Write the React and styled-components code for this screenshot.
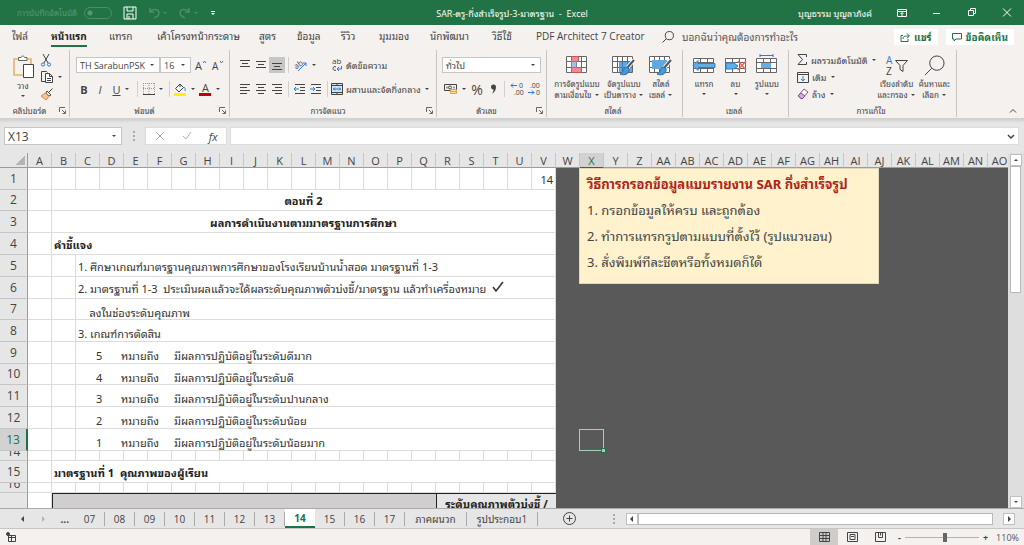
import React from 'react';
import styled, { createGlobalStyle, css } from 'styled-components';

const Global = createGlobalStyle`
  *, *::before, *::after { box-sizing: border-box; }
  html, body { margin: 0; padding: 0; }
  body { font-family: "Open Sans", "Noto Sans Thai Looped", Loma, "Noto Sans Thai", sans-serif; font-size: 10px; color: #444; overflow: hidden; }
  button, input, select { font: inherit; color: inherit; margin: 0; }
  button { border: 0; padding: 0; background: none; }
  svg { overflow: visible; flex: none; }
  h1, h2, p { margin: 0; font-size: inherit; font-weight: inherit; }
`;

const Page = styled.div`
  display: flex;
  flex-direction: column;
  height: 100vh;
  background: #e6e6e6;
`;

/* ---------- title bar ---------- */

const TitleBar = styled.header`
  display: grid;
  grid-template-columns: 1fr auto 1fr;
  align-items: center;
  flex: none;
  height: 25px;
  background: #217346;
  color: #fff;
  font-size: 9px;
`;

const QuickAccess = styled.div`
  display: flex;
  align-items: center;
  padding-left: 17px;
  gap: 11px;
`;

const AutoSave = styled.label`
  display: flex;
  align-items: center;
  gap: 7px;
  color: #57976f;
  white-space: nowrap;
  font-size: 8px;
`;

const Toggle = styled.input`
  appearance: none;
  width: 28px;
  height: 12px;
  margin: 0;
  border: 1px solid #4c8d66;
  border-radius: 6px;
  background: radial-gradient(circle at 5px 5px, #57976f 2px, transparent 3px);
`;

const QuickButton = styled.button`
  display: flex;
  align-items: center;
  gap: 2px;
  color: ${(p) => (p.$dim ? '#4c8d66' : '#fff')};
`;

const DocTitle = styled.h1`
  white-space: nowrap;
`;

const WindowTools = styled.div`
  display: flex;
  align-items: center;
  justify-content: flex-end;
  gap: 25px;
  padding-right: 12px;
  white-space: nowrap;
`;

const WindowButton = styled.button`
  display: flex;
  color: #fff;
`;

/* ---------- ribbon tabs ---------- */

const TabRow = styled.nav`
  display: flex;
  align-items: center;
  flex: none;
  height: 24px;
  padding: 0 10px 0 12px;
  background: #f4f1ef;
  white-space: nowrap;
`;

const RibbonTab = styled.button`
  flex: none;
  width: ${(p) => p.$w}px;
  text-align: left;
  font-weight: ${(p) => (p.$active ? 700 : 400)};
  color: ${(p) => (p.$active ? '#222' : '#444')};

  span {
    display: inline-block;
    line-height: 18px;
    border-bottom: 2px solid ${(p) => (p.$active ? '#217346' : 'transparent')};
  }
`;

const Search = styled.label`
  display: flex;
  align-items: center;
  flex: 1;
  gap: 8px;
  min-width: 0;

  input {
    flex: 1;
    min-width: 0;
    padding: 0;
    border: 0;
    outline: 0;
    background: none;
  }
  input::placeholder { color: #555; opacity: 1; }
`;

const TabActions = styled.div`
  display: flex;
  gap: 8px;
`;

const ActionButton = styled.button`
  display: flex;
  align-items: center;
  gap: 4px;
  height: 16px;
  padding: 0 6px;
  background: #fff;
  color: #217346;
  font-weight: 700;
  line-height: 16px;
`;

/* ---------- ribbon ---------- */

const Ribbon = styled.div`
  display: flex;
  flex: none;
  height: 70px;
  padding: 1px 0;
  background: #f4f1ef;
  border-bottom: 1px solid #d2d0ce;
  color: #444;
`;

const Group = styled.section`
  display: flex;
  flex-direction: column;
  flex: none;
  width: ${(p) => p.$w}px;
  border-right: 1px solid #c8c6c4;
`;

const GroupBody = styled.div`
  display: flex;
  flex: 1;
  min-height: 0;
  padding: 1px 6px 0 ${(p) => p.$left || 6}px;
  gap: ${(p) => p.$gap || 0}px;
`;

const GroupFoot = styled.footer`
  display: grid;
  grid-template-columns: 1fr auto;
  align-items: center;
  height: 13px;
  padding-right: 3px;
  text-align: center;
  font-size: 8px;
  line-height: 12px;
`;

const Stack = styled.div`
  display: flex;
  flex-direction: column;
  gap: ${(p) => (p.$spread ? 4 : 0)}px;
  padding-top: ${(p) => (p.$spread ? 4 : 0)}px;
`;

const ToolRow = styled.div`
  display: flex;
  align-items: center;
  height: ${(p) => p.$h || 20}px;
`;

const Tool = styled.button`
  display: flex;
  align-items: center;
  justify-content: center;
  flex: none;
  height: 16px;
  width: ${(p) => (p.$w ? p.$w + 'px' : 'auto')};
  gap: 3px;
  background: ${(p) => (p.$on ? '#c8c6c4' : 'none')};
  white-space: nowrap;
  font-size: ${(p) => p.$size || 9}px;
`;

const BigTool = styled.button`
  display: flex;
  flex-direction: column;
  align-items: center;
  justify-content: flex-start;
  flex: none;
  width: ${(p) => p.$w}px;
  height: 52px;
  padding-top: 4px;
  font-size: 8px;
  line-height: 11px;
  white-space: nowrap;

  > svg:first-child { margin-bottom: 2px; }
  > svg:last-child { margin-top: 2px; }
`;

const Divider = styled.i`
  flex: none;
  width: 1px;
  height: 16px;
  margin: 0 3px;
  background: #d2d0ce;
`;

const Combo = styled.span`
  display: flex;
  align-items: center;
  flex: none;
  position: relative;
  width: ${(p) => p.$w}px;
  height: ${(p) => p.$h || 16}px;
  border: 1px solid #c8c6c4;
  background: #fff;

  select, input {
    appearance: none;
    width: 100%;
    height: 100%;
    padding: 0 0 0 3px;
    border: 0;
    outline: 0;
    background: none;
    font-size: ${(p) => p.$size || 9}px;
  }
  svg { position: absolute; right: 4px; pointer-events: none; }
`;

/* ---------- formula bar ---------- */

const FormulaBar = styled.div`
  display: flex;
  align-items: center;
  flex: none;
  height: 34px;
  padding: 0 5px 0 4px;
  box-shadow: inset 0 4px 3px -2px #d0d0d0;
`;

const Dots = styled.span`
  display: grid;
  gap: 2px;
  margin: ${(p) => p.$m || '0 10px 0 11px'};

  i { width: 2px; height: 2px; background: #aaa; }
`;

const FormulaTools = styled.div`
  display: flex;
  align-items: center;
  justify-content: space-around;
  flex: none;
  width: 82px;
  height: 18px;
  margin-right: 3px;
  background: #fff;
  border: 1px solid #dcdcdc;
`;

const FormulaField = styled.label`
  display: flex;
  align-items: center;
  flex: 1;
  height: 18px;
  padding-right: 3px;
  background: #fff;
  border: 1px solid #dcdcdc;

  input { flex: 1; border: 0; outline: 0; background: none; height: 100%; min-width: 0; }
`;

/* ---------- worksheet ---------- */

const SheetArea = styled.main`
  display: flex;
  flex: 1;
  min-height: 0;
`;

const Viewport = styled.div`
  position: relative;
  flex: 1;
  min-width: 0;
  overflow: hidden;
`;

const sheetFont = '"Noto Sans Thai Looped", "Noto Sans", sans-serif';

const Sheet = styled.table`
  table-layout: fixed;
  width: 1012px;
  border-collapse: separate;
  border-spacing: 0;
  background: #fff;
  color: #333;
  font-family: ${sheetFont};
  font-size: 11px;
  line-height: 14px;
`;

const ColHead = styled.th`
  height: 15px;
  padding: 1px 0 0;
  background: ${(p) => (p.$on ? '#d2d2d2' : '#e6e6e6')};
  color: ${(p) => (p.$on ? '#217346' : '#444')};
  border-right: 1px solid #c6c6c6;
  border-bottom: 1px solid ${(p) => (p.$on ? '#217346' : '#9b9b9b')};
  font: 400 11px/12px "Open Sans", sans-serif;
  white-space: nowrap;
`;

const Corner = styled.th`
  height: 15px;
  padding: 0;
  background: linear-gradient(135deg, transparent 50%, #b4b4b4 50%) 16px 3px / 9px 9px no-repeat #e6e6e6;
  border-right: 1px solid #9b9b9b;
  border-bottom: 1px solid #9b9b9b;
`;

const RowHead = styled.th`
  height: ${(p) => p.$h}px;
  padding: 0;
  background: ${(p) => (p.$on ? '#d2d2d2' : '#e6e6e6')};
  color: ${(p) => (p.$on ? '#217346' : '#444')};
  border-right: ${(p) => (p.$on ? '2px solid #217346' : '1px solid #9b9b9b')};
  border-bottom: 1px solid #c6c6c6;
  font: 400 12px/16px "Open Sans", sans-serif;

  div {
    ${(p) => p.$h < 16 && css`
      height: ${p.$h - 1}px;
      line-height: 1px;
      overflow: hidden;
    `}
  }
`;

const Cell = styled.td`
  padding: ${(p) => (p.$low ? 5 : 0)}px 2px 0;
  white-space: pre;
  vertical-align: middle;
  text-align: ${(p) => p.$align || 'left'};
  border-right: 1px solid #dcdcdc;
  border-bottom: 1px solid #dcdcdc;
  ${(p) => p.$bold && css`font-weight: 700; color: #222;`}
  ${(p) => p.$table && css`
    background: ${p.$table};
    border-top: 1px solid #222;
    border-left: 1px solid #222;
    border-bottom: 0;
    border-right: 0;
  `}
`;

const Outside = styled.td`
  padding: 0;
  background: #595959;
`;

const Level = styled.div`
  display: grid;
  grid-template-columns: 43px 53px 1fr;

  > :first-child { padding-left: 18px; }
`;

const CheckMark = styled.svg`
  margin-left: 4px;
`;

const Note = styled.aside`
  position: absolute;
  left: 579px;
  top: 15px;
  width: 300px;
  height: 116px;
  padding: 2px 7px;
  background: #fff2cc;
  border: 1px solid #e0d8bc;
  font-family: ${sheetFont};
  font-size: 13px;
  line-height: 26px;
  white-space: nowrap;
  color: #444;

  h2 { font-weight: 700; color: #b02418; }
`;

const Selection = styled.div`
  position: absolute;
  left: 579px;
  top: 276px;
  width: 25px;
  height: 22px;
  border: 1px solid #9fd5b7;

  &::after {
    content: "";
    position: absolute;
    right: -3px;
    bottom: -3px;
    width: 5px;
    height: 5px;
    background: #9fd5b7;
    border: 1px solid #217346;
  }
`;

const VScroll = styled.div`
  display: flex;
  flex-direction: column;
  flex: none;
  width: 16px;
  padding: 1px 3px 0 2px;
  background: #dedede;
`;

const ScrollButton = styled.button`
  display: flex;
  align-items: center;
  justify-content: center;
  flex: none;
  width: 12px;
  height: 12px;
  background: #fff;
  border: 1px solid #c0c0c0;
`;

const Thumb = styled.div`
  flex: ${(p) => p.$flex};
  background: #fff;
  border: 1px solid #b8b8b8;
`;

const Track = styled.div`
  flex: ${(p) => p.$flex};
`;

/* ---------- sheet tabs and status bar ---------- */

const SheetTabs = styled.div`
  display: flex;
  align-items: center;
  flex: none;
  height: 21px;
  border-top: 1px solid #ababab;
  border-bottom: 1px solid #c6c6c6;
  color: #444;
`;

const TabNav = styled.div`
  display: flex;
  align-items: center;
  justify-content: space-between;
  flex: none;
  width: 75px;
  padding: 0 6px 0 20px;

  svg + svg { opacity: .3; }
`;

const SheetTab = styled.button`
  flex: none;
  width: ${(p) => p.$w || 30}px;
  height: 14px;
  line-height: 12px;
  border-right: 1px solid #ababab;
  white-space: nowrap;
  ${(p) => p.$on && css`
    height: 19px;
    background: #fff;
    color: #217346;
    font-weight: 700;
    border-bottom: 2px solid #217346;
    border-right: 0;
  `}
`;

const AddSheet = styled.button`
  display: flex;
  margin-left: 25px;
`;

const HScroll = styled.div`
  display: flex;
  align-items: center;
  flex: 1;
  height: 12px;
  padding-right: 9px;

  > div { height: 12px; }
`;

const StatusBar = styled.footer`
  display: flex;
  align-items: center;
  flex: none;
  height: 16px;
  padding: 0 5px 0 6px;
  background: #f4f1ef;
  font-size: 9px;
`;

const ViewButtons = styled.div`
  display: flex;
  margin-left: auto;
`;

const ViewButton = styled.button`
  display: flex;
  align-items: center;
  justify-content: center;
  width: 28px;
  height: 16px;
  background: ${(p) => (p.$on ? '#cfccca' : 'none')};
`;

const Zoom = styled.div`
  display: flex;
  align-items: center;
  gap: 4px;
  margin-left: 4px;

  input {
    appearance: none;
    width: 74px;
    height: 10px;
    background: linear-gradient(#b4b2b0, #b4b2b0) 0 5px / 100% 1px no-repeat;
  }
  input::-webkit-slider-thumb {
    appearance: none;
    width: 4px;
    height: 9px;
    background: #666;
  }
  output { margin-left: 4px; color: #555; }
`;

const CollapseButton = styled.button`
  display: flex;
  align-self: flex-end;
  margin: 0 7px 3px auto;
`;

/* ---------- icons ---------- */

const Svg = ({ w = 16, h = w, vb, children, ...rest }) => (
  <svg width={w} height={h} viewBox={vb || `0 0 ${w} ${h}`} fill="none" stroke="currentColor" aria-hidden="true" {...rest}>
    {children}
  </svg>
);

const Caret = ({ up, left, right }) => (
  <Svg w={6} h={6} stroke="none">
    <path fill="currentColor" d={up ? 'M1 4h4L3 2z' : left ? 'M4 0v6L1 3z' : right ? 'M2 0v6l3-3z' : 'M1 2h4L3 4z'} />
  </Svg>
);

const Lines = ({ rows }) => (
  <Svg w={12} h={12}>
    {rows.map(([x, y, w]) => <path key={y} d={`M${x} ${y}.5h${w}`} />)}
  </Svg>
);

const PasteIcon = () => (
  <Svg w={22} h={23}>
    <path stroke="#e5b566" strokeWidth="1.600" d="M6 4H2v16h9M15 4h4v5" />
    <path fill="#fff" stroke="#666" d="M6.500 5.500v-3h2.500c.5-2 3-2 3.500 0h2.500v3z" />
    <path fill="#fff" stroke="#444" d="M11.500 9.500h10v13h-10z" />
  </Svg>
);
const CutIcon = () => (
  <Svg w={12} h={14}>
    <path stroke="#444" d="M3 1l5 9M9 1L4 10" />
    <circle cx="3" cy="11.500" r="1.600" stroke="#2b7cd3" /><circle cx="9" cy="11.500" r="1.600" stroke="#2b7cd3" />
  </Svg>
);
const CopyIcon = () => (
  <Svg w={14} h={14}>
    <path d="M5 11.500H1.500V1.500h5l1 1" /><path fill="#fff" d="M5.500 3.500h4l3 3v6h-7z" /><path d="M9.500 3.500v3h3M7 8.500h4M7 10.500h4" />
  </Svg>
);
const BrushIcon = () => (
  <Svg w={14} h={14}>
    <path d="M12.500 1.500L8 6M7 4l4 4-2 1-3-3z" /><path fill="#f5c39a" stroke="#e08a45" d="M5.500 6L9 9.500 6 13 1 9z" />
  </Svg>
);
const OrientIcon = () => (
  <Svg w={14} h={14}>
    <text x="0" y="9" fontSize="8" fill="#444" stroke="none" transform="rotate(-35 5 7)">ab</text>
    <path stroke="#2b7cd3" d="M4 13L12 5M9 5h3v3" />
  </Svg>
);
const IndentIcon = ({ dir }) => (
  <Svg w={12} h={12}>
    <path d="M1 1.500h10M6 4.500h5M6 7.500h5M1 10.500h10" />
    <path stroke="#2b7cd3" d={dir === 'in' ? 'M0 6h5M3 4l2 2-2 2' : 'M0 6h5M2 4L0 6l2 2'} />
  </Svg>
);
const WrapIcon = () => (
  <Svg w={12} h={14}>
    <text x="1" y="6" fontSize="8" fill="#444" stroke="none">ab</text>
    <path d="M5 9c-1.500-1-3 0-3 1.500s1.500 2.500 3 1.500" />
    <path stroke="#2b7cd3" d="M10.500 8v3H6.500M8 9l-2 2 2 2" />
  </Svg>
);
const MergeIcon = () => (
  <Svg w={12} h={12}>
    <path fill="#cfe6f5" stroke="#444" d="M.5 .5h11v11H.5z" /><path d="M.5 2.500h11M.5 9.500h11M6 .5v2M6 9.500v2" />
    <path stroke="#2b7cd3" d="M2 6h8M4 4.500L2.500 6 4 7.500M8 4.500L9.500 6 8 7.500" />
  </Svg>
);
const BorderIcon = () => (
  <Svg w={12} h={12}>
    <path stroke="#999" strokeDasharray="1 1" d="M.5 0v11M11.500 0v11M6 0v11M0 .5h12M0 5.500h12" /><path d="M0 11.500h12" />
  </Svg>
);
const FillIcon = () => (
  <Svg w={13} h={13}>
    <path d="M6 1L1.500 5.500 5 9l4.500-4.500zM6 1v3" /><path stroke="#2b7cd3" d="M10 4c1 1 1.500 2 1 4" />
    <path stroke="none" fill="#ffef00" d="M0 10h12v3H0z" />
  </Svg>
);
const FontColorIcon = () => (
  <Svg w={13} h={13}>
    <text x="3" y="9" fontSize="11" fill="#444" stroke="none">A</text><path stroke="none" fill="#c00000" d="M0 10h12v3H0z" />
  </Svg>
);
const FontSizeIcon = ({ up }) => (
  <Svg w={13} h={13}>
    <text x="1" y="11" fontSize={up ? 11 : 10} fill="#444" stroke="none">A</text>
    <path stroke="#2b7cd3" d={up ? 'M9 4l1.500-2L12 4' : 'M9 2l1.500 2L12 2'} />
  </Svg>
);
const MoneyIcon = () => (
  <Svg w={14} h={12}>
    <path d="M.5 1.500h12v6H.5zM3 3.500v2M10 3.500v2" /><circle cx="6" cy="4.500" r="1.500" />
    <path fill="#fbe0b8" stroke="#e0a33a" d="M6.500 6.500h6v4h-6zM6.500 8.500h6" />
  </Svg>
);
const DecimalIcon = ({ more }) => (
  <Svg w={14} h={14}>
    <text x={more ? 9 : 3} y="6" fontSize="7" fill="#444" stroke="none">{more ? '0' : '.00'}</text>
    <text x={more ? 4 : 9} y="13" fontSize="7" fill="#444" stroke="none">{more ? '.00' : '0'}</text>
    <path stroke="#2b7cd3" d={more ? 'M1 3.500h6M3 1.500l-2 2 2 2' : 'M1 10.500h6M5 8.500l2 2-2 2'} />
  </Svg>
);
const GridLines = () => <path stroke="#666" d="M.5 1.500h20v16H.5zM.5 6.500h20M.5 12.500h20M5.500 1.500v16M10.500 1.500v16M15.500 1.500v16" />;
const CondIcon = () => (
  <Svg w={22} h={21}><path fill="#fff" stroke="none" d="M0 1h21v17H0z" /><GridLines /><path fill="#f08a92" stroke="#c9545e" d="M5.500 1.500h7v5h-7zM5.500 12.500h10v5h-10z" /><path fill="#a9bde6" stroke="#6b84c4" d="M5.500 6.500h5v6h-5z" /></Svg>
);
const TableIcon = ({ cell }) => (
  <Svg w={24} h={21}>
    <path fill="#fff" stroke="none" d="M0 1h21v17H0z" /><GridLines />
    <path fill="#5fa8e0" stroke="none" d={cell ? 'M3 5h15v9H3z' : 'M7 7h13v10H7z'} />
    {!cell && <path stroke="#3b7fbf" d="M7 12.500h13M10.500 7v10M15.500 7v10" />}
    <path stroke="#fff" strokeWidth="4" d="M22 5l-7 8" /><path stroke="#555" strokeWidth="2" d="M22 5l-7 8" />
    <path fill="#4a98d8" stroke="#2b6cb0" d="M15 12c-4 0-3 5-7 7 4 2 10 0 9-5z" />
  </Svg>
);
const CellsIcon = ({ kind }) => (
  <Svg w={24} h={21}>
    <path fill="#fff" stroke="none" d="M1 3h20v15H1z" />
    <path stroke="#666" d="M1.500 3.500h20v14h-20zM1.500 7.500h20M1.500 13.500h20M8.500 3.500v14M15.500 3.500v14" />
    {kind === 'insert' && <path fill="#5fb0e6" stroke="#2b7cd3" d="M6 5.500L1 10.500l5 5v-3h17V8.500H6z" />}
    {kind === 'delete' && <><path fill="#5fb0e6" stroke="#2b7cd3" d="M2 8h8l4 3-4 3H2z" /><path stroke="#e8695c" strokeWidth="1.500" d="M14 6l8 9M22 6l-8 9" /></>}
    {kind === 'format' && <><path fill="#5fb0e6" stroke="none" d="M6 8h10v5H6z" /><path stroke="#2b7cd3" d="M5 .5h13M5 -1v3M18 -1v3" /></>}
  </Svg>
);
const SumIcon = () => <Svg w={11} h={11}><path d="M9.500 3V.5H1L5.500 5.500 1 10.500h8.500V8" /></Svg>;
const FillDownIcon = () => <Svg w={12} h={12}><path d="M.5 1.500h11v10H.5zM.5 3.500h11" /><path stroke="#2b7cd3" d="M6 5v5M4 8l2 2 2-2" /></Svg>;
const EraserIcon = () => <Svg w={12} h={12}><path stroke="#8a4a9e" fill="#fff" d="M7 1l4 3-6 7-4-3z" /><path fill="#d9a8e4" stroke="#8a4a9e" d="M4 5l4 3-3 3-4-3z" /></Svg>;
const SortIcon = () => (
  <Svg w={24} h={21}>
    <text x="1" y="9" fontSize="10" fill="#2b7cd3" stroke="none">A</text>
    <text x="1" y="20" fontSize="10" fill="#444" stroke="none">Z</text>
    <path d="M10.500 5.500h12l-4.500 5v6l-3-2v-4z" />
  </Svg>
);
const FindIcon = ({ size = 21 }) => (
  <Svg w={size} h={size} vb="0 0 22 22" strokeWidth={22 / size}><circle cx="13.500" cy="8.500" r="7.500" /><path d="M8 14l-7 7" /></Svg>
);
const LauncherIcon = () => <Svg w={7} h={7}><path d="M.5 5V.5H6M3 3l3 3M6.500 3.500v3h-3" strokeWidth=".8" /></Svg>;
const SaveIcon = () => <Svg w={14} h={14}><path d="M1 1h12v12H1zM4 1v4h6V1M4 13V8h6v5M6 10v3" /></Svg>;
const UndoIcon = ({ flip }) => <Svg w={12} h={12} strokeWidth="1.500" transform={flip ? 'scale(-1 1)' : undefined}><path d="M2 1v4h4M2 5c3-4 9-3 9 1 0 3-3 4-5 5" /></Svg>;
const ShareIcon = () => <Svg w={10} h={10}><path d="M3 3.500H1v6h7V7M3 7c0-3 2-3 6-3M7 1.500L9.500 4 7 6" /></Svg>;
const CommentIcon = () => <Svg w={10} h={10}><path d="M.5 1.500h9v5.500H4L2 9V7H.5z" /></Svg>;

const ribbonTabs = [
  ['ไฟล์', 39], ['หน้าแรก', 58], ['แทรก', 48], ['เค้าโครงหน้ากระดาษ', 102], ['สูตร', 38], ['ข้อมูล', 44],
  ['รีวิว', 38], ['มุมมอง', 51], ['นักพัฒนา', 62], ['วิธีใช้', 44], ['PDF Architect 7 Creator', 126],
];

const columns = Array.from({ length: 41 }, (_, i) =>
  i < 26 ? String.fromCharCode(65 + i) : 'A' + String.fromCharCode(39 + i));

const rows = [
  { h: 22, kind: 'cells', last: '14' },
  { h: 21, text: 'ตอนที่ 2', align: 'center' },
  { h: 22, text: 'ผลการดำเนินงานตามมาตรฐานการศึกษา', align: 'center' },
  { h: 22, text: 'คำชี้แจง' },
  { h: 22, kind: 'item', text: '1. ศึกษาเกณฑ์มาตรฐานคุณภาพการศึกษาของโรงเรียนบ้านน้ำสอด มาตรฐานที่ 1-3' },
  { h: 22, kind: 'item', text: '2. มาตรฐานที่ 1-3  ประเมินผลแล้วจะได้ผลระดับคุณภาพตัวบ่งชี้/มาตรฐาน แล้วทำเครื่องหมาย', check: true },
  { h: 21, kind: 'item', low: true, text: '    ลงในช่องระดับคุณภาพ' },
  { h: 22, kind: 'item', low: true, text: '3. เกณฑ์การตัดสิน' },
  { h: 22, kind: 'level', low: true, n: 5, text: 'มีผลการปฏิบัติอยู่ในระดับดีมาก' },
  { h: 21, kind: 'level', low: true, n: 4, text: 'มีผลการปฏิบัติอยู่ในระดับดี' },
  { h: 22, kind: 'level', low: true, n: 3, text: 'มีผลการปฏิบัติอยู่ในระดับปานกลาง' },
  { h: 22, kind: 'level', low: true, n: 2, text: 'มีผลการปฏิบัติอยู่ในระดับน้อย' },
  { h: 22, kind: 'level', low: true, n: 1, text: 'มีผลการปฏิบัติอยู่ในระดับน้อยมาก', on: true },
  { h: 10, kind: 'cells' },
  { h: 22, text: 'มาตรฐานที่ 1  คุณภาพของผู้เรียน' },
  { h: 10, kind: 'cells' },
  { h: 18, kind: 'head', text: 'ระดับคุณภาพตัวบ่งชี้ /' },
];

function RowCells({ row }) {
  if (row.kind === 'cells') {
    return columns.slice(0, 22).map((c, i) => <Cell key={c} $align="right">{i === 21 ? row.last : null}</Cell>);
  }
  if (row.kind === 'head') {
    return <><Cell /><Cell colSpan={16} $table="#d0cece" /><Cell colSpan={5} $table="#e7e6e6" $bold $align="center">{row.text}</Cell></>;
  }
  if (row.kind === 'item' || row.kind === 'level') {
    return (
      <>
        <Cell /><Cell />
        <Cell colSpan={20} $low={row.low}>
          {row.kind === 'level'
            ? <Level><span>{row.n}</span><span>หมายถึง</span><span>{row.text}</span></Level>
            : row.text}
          {row.check && (
            <CheckMark width="14" height="12" viewBox="0 0 14 12" fill="none" stroke="currentColor" strokeWidth="1.500">
              <path d="M3 6l3 4 7-9" />
            </CheckMark>
          )}
        </Cell>
      </>
    );
  }
  return <><Cell /><Cell colSpan={21} $bold $align={row.align}>{row.text}</Cell></>;
}

const sheetTabs = ['07', '08', '09', '10', '11', '12', '13', '14', '15', '16', '17'];

function RibbonGroup({ w, label, launcher, left, gap, children }) {
  return (
    <Group $w={w} aria-label={label}>
      <GroupBody $left={left} $gap={gap}>{children}</GroupBody>
      <GroupFoot><span>{label}</span>{launcher && <LauncherIcon />}</GroupFoot>
    </Group>
  );
}

export default function App() {
  return (
    <Page>
      <Global />
      <TitleBar>
        <QuickAccess>
          <AutoSave>การบันทึกอัตโนมัติ<Toggle type="checkbox" /></AutoSave>
          <QuickButton aria-label="บันทึก"><SaveIcon /></QuickButton>
          <QuickButton $dim aria-label="เลิกทำ"><UndoIcon /><Caret /></QuickButton>
          <QuickButton $dim aria-label="ทำซ้ำ"><UndoIcon flip /><Caret /></QuickButton>
          <QuickButton aria-label="กำหนดเอง"><Svg w={6} h={8}><path d="M1 2.500h4" /><path fill="currentColor" stroke="none" d="M1 4h4L3 6z" /></Svg></QuickButton>
        </QuickAccess>
        <DocTitle>SAR-ตรู-กึ่งสำเร็จรูป-3-มาตรฐาน&nbsp; -&nbsp; Excel</DocTitle>
        <WindowTools>
          <span>บุญธรรม บุญลาภังค์</span>
          <WindowButton aria-label="ตัวเลือกริบบิ้น"><Svg w={10} h={8}><path d="M.5 .5h9v7h-9zM.5 2.500h9M5 7V4M3.500 5L5 3.500 6.500 5" /></Svg></WindowButton>
          <WindowButton aria-label="ย่อ"><Svg w={10} h={8}><path d="M1 4.500h7" /></Svg></WindowButton>
          <WindowButton aria-label="คืนค่า"><Svg w={10} h={9}><path d="M1.500 2.500h5v5h-5zM3.500 2V.5h5v5H7" /></Svg></WindowButton>
          <WindowButton aria-label="ปิด"><Svg w={10} h={9}><path d="M1 .5l8 8M9 .5l-8 8" /></Svg></WindowButton>
        </WindowTools>
      </TitleBar>

      <TabRow>
        {ribbonTabs.map(([t, w]) => <RibbonTab key={t} $w={w} $active={t === 'หน้าแรก'}><span>{t}</span></RibbonTab>)}
        <Search><FindIcon size={12} /><input aria-label="ค้นหา" placeholder="บอกฉันว่าคุณต้องการทำอะไร" /></Search>
        <TabActions>
          <ActionButton><ShareIcon />แชร์</ActionButton>
          <ActionButton><CommentIcon />ข้อคิดเห็น</ActionButton>
        </TabActions>
      </TabRow>

      <Ribbon>
        <RibbonGroup w={70} label="คลิปบอร์ด" launcher left={10} gap={4}>
          <BigTool $w={26}><PasteIcon />วาง<Caret /></BigTool>
          <Stack>
            <ToolRow $h={17}><Tool aria-label="ตัด"><CutIcon /></Tool></ToolRow>
            <ToolRow $h={17}><Tool aria-label="คัดลอก"><CopyIcon /><Caret /></Tool></ToolRow>
            <ToolRow $h={17}><Tool aria-label="ตัวคัดวางรูปแบบ"><BrushIcon /></Tool></ToolRow>
          </Stack>
        </RibbonGroup>

        <RibbonGroup w={160} label="ฟอนต์" launcher>
          <Stack $spread>
            <ToolRow>
              <Combo $w={84}><select aria-label="ฟอนต์"><option>TH SarabunPSK</option></select><Caret /></Combo>
              <Combo $w={31}><select aria-label="ขนาดฟอนต์"><option>16</option></select><Caret /></Combo>
              <Tool $w={18} aria-label="เพิ่มขนาดฟอนต์"><FontSizeIcon up /></Tool>
              <Tool $w={16} aria-label="ลดขนาดฟอนต์"><FontSizeIcon /></Tool>
            </ToolRow>
            <ToolRow>
              <Tool $w={16} $size={11}><b>B</b></Tool>
              <Tool $w={16} $size={11}><i>I</i></Tool>
              <Tool $w={26} $size={11}><u>U</u><Caret /></Tool>
              <Divider />
              <Tool $w={25} aria-label="เส้นขอบ"><BorderIcon /><Caret /></Tool>
              <Divider />
              <Tool $w={24} aria-label="สีเติม"><FillIcon /><Caret /></Tool>
              <Tool $w={26} aria-label="สีฟอนต์"><FontColorIcon /><Caret /></Tool>
            </ToolRow>
          </Stack>
        </RibbonGroup>

        <RibbonGroup w={207} label="การจัดแนว" launcher left={7}>
          <Stack $spread>
            <ToolRow>
              <Tool $w={16} aria-label="จัดชิดบน"><Lines rows={[[1, 1, 10], [3, 4, 6], [1, 7, 10]]} /></Tool>
              <Tool $w={16} aria-label="จัดกึ่งกลางแนวตั้ง"><Lines rows={[[1, 2, 10], [3, 5, 6], [1, 8, 10]]} /></Tool>
              <Tool $w={16} $on aria-label="จัดชิดล่าง"><Lines rows={[[1, 4, 10], [3, 7, 6], [1, 10, 10]]} /></Tool>
              <Divider />
              <Tool $w={26} aria-label="การวางแนว"><OrientIcon /><Caret /></Tool>
            </ToolRow>
            <ToolRow>
              <Tool $w={16} aria-label="ชิดซ้าย"><Lines rows={[[1, 1, 10], [1, 4, 7], [1, 7, 10], [1, 10, 7]]} /></Tool>
              <Tool $w={16} aria-label="กึ่งกลาง"><Lines rows={[[1, 1, 10], [3, 4, 6], [1, 7, 10], [3, 10, 6]]} /></Tool>
              <Tool $w={16} aria-label="ชิดขวา"><Lines rows={[[1, 1, 10], [4, 4, 7], [1, 7, 10], [4, 10, 7]]} /></Tool>
              <Divider />
              <Tool $w={16} aria-label="ลดการเยื้อง"><IndentIcon /></Tool>
              <Tool $w={16} aria-label="เพิ่มการเยื้อง"><IndentIcon dir="in" /></Tool>
              <Divider />
            </ToolRow>
          </Stack>
          <Stack $spread>
            <ToolRow><Tool><WrapIcon />ตัดข้อความ</Tool></ToolRow>
            <ToolRow><Tool><MergeIcon />ผสานและจัดกึ่งกลาง<Caret /></Tool></ToolRow>
          </Stack>
        </RibbonGroup>

        <RibbonGroup w={110} label="ตัวเลข" launcher left={5}>
          <Stack $spread>
            <ToolRow><Combo $w={99}><select aria-label="รูปแบบตัวเลข"><option>ทั่วไป</option></select><Caret /></Combo></ToolRow>
            <ToolRow>
              <Tool $w={26} aria-label="รูปแบบบัญชี"><MoneyIcon /><Caret /></Tool>
              <Tool $w={18} $size={14}>%</Tool>
              <Tool $w={15} aria-label="ลักษณะจุลภาค"><Svg w={7} h={12} stroke="none"><path fill="currentColor" d="M1 4a2.500 2.500 0 1 1 5 0c0 3-1.500 5-4 7 1-2 1.500-3 1.500-4.500C2 6.500 1 5.500 1 4z" /></Svg></Tool>
              <Divider />
              <Tool $w={17} aria-label="เพิ่มตำแหน่งทศนิยม"><DecimalIcon more /></Tool>
              <Tool $w={17} aria-label="ลดตำแหน่งทศนิยม"><DecimalIcon /></Tool>
            </ToolRow>
          </Stack>
        </RibbonGroup>

        <RibbonGroup w={136} label="สไตล์" left={5}>
          <BigTool $w={50}><CondIcon /><span>การจัดรูปแบบ</span><span>ตามเงื่อนไข <Caret /></span></BigTool>
          <BigTool $w={44}><TableIcon /><span>จัดรูปแบบ</span><span>เป็นตาราง <Caret /></span></BigTool>
          <BigTool $w={30}><TableIcon cell /><span>สไตล์</span><span>เซลล์ <Caret /></span></BigTool>
        </RibbonGroup>

        <RibbonGroup w={106} label="เซลล์" left={5}>
          <BigTool $w={32}><CellsIcon kind="insert" />แทรก<Caret /></BigTool>
          <BigTool $w={31}><CellsIcon kind="delete" />ลบ<Caret /></BigTool>
          <BigTool $w={32}><CellsIcon kind="format" />รูปแบบ<Caret /></BigTool>
        </RibbonGroup>

        <RibbonGroup w={168} label="การแก้ไข" left={8}>
          <Stack>
            <ToolRow $h={17}><Tool><SumIcon />ผลรวมอัตโนมัติ <Caret /></Tool></ToolRow>
            <ToolRow $h={17}><Tool><FillDownIcon />เติม<Caret /></Tool></ToolRow>
            <ToolRow $h={17}><Tool><EraserIcon />ล้าง<Caret /></Tool></ToolRow>
          </Stack>
          <BigTool $w={40}><SortIcon /><span>เรียงลำดับ</span><span>และกรอง <Caret /></span></BigTool>
          <BigTool $w={36}><FindIcon /><span>ค้นหาและ</span><span>เลือก <Caret /></span></BigTool>
        </RibbonGroup>
        <CollapseButton aria-label="ยุบ Ribbon"><Svg w={8} h={6}><path d="M1 4.500l3-3 3 3" /></Svg></CollapseButton>
      </Ribbon>

      <FormulaBar>
        <Combo $w={118} $h={18} $size={12}><input aria-label="กล่องชื่อ" defaultValue="X13" /><Caret /></Combo>
        <Dots><i /><i /><i /></Dots>
        <FormulaTools>
          <Tool aria-label="ยกเลิก"><Svg w={10} h={10} stroke="#b0b0b0"><path d="M1 1l8 8M9 1L1 9" /></Svg></Tool>
          <Tool aria-label="ป้อน"><Svg w={10} h={10} stroke="#b0b0b0"><path d="M1 5l3 3 5-7" /></Svg></Tool>
          <Tool $size={11}><i>fx</i></Tool>
        </FormulaTools>
        <FormulaField><input aria-label="แถบสูตร" /><Svg w={8} h={8} strokeWidth="1.500"><path d="M1 3l3 3 3-3" /></Svg></FormulaField>
      </FormulaBar>

      <SheetArea>
        <Viewport>
          <Sheet>
            <colgroup><col style={{ width: 28 }} />{columns.map((c) => <col key={c} style={{ width: 24 }} />)}</colgroup>
            <thead>
              <tr><Corner />{columns.map((c) => <ColHead key={c} $on={c === 'X'}>{c}</ColHead>)}</tr>
            </thead>
            <tbody>
              {rows.map((r, i) => (
                <tr key={i}>
                  <RowHead $h={r.h} $on={r.on}><div>{i < 16 ? i + 1 : null}</div></RowHead>
                  <RowCells row={r} />
                  {i === 0 && <Outside colSpan={19} rowSpan={17} />}
                </tr>
              ))}
            </tbody>
          </Sheet>
          <Note>
            <h2>วิธีการกรอกข้อมูลแบบรายงาน SAR กึ่งสำเร็จรูป</h2>
            <p>1. กรอกข้อมูลให้ครบ และถูกต้อง</p>
            <p>2. ทำการแทรกรูปตามแบบที่ตั้งไว้ (รูปแนวนอน)</p>
            <p>3. สั่งพิมพ์ทีละชีตหรือทั้งหมดก็ได้</p>
          </Note>
          <Selection />
        </Viewport>
        <VScroll>
          <ScrollButton aria-label="เลื่อนขึ้น"><Caret up /></ScrollButton>
          <Thumb $flex={38} />
          <Track $flex={62} />
          <ScrollButton aria-label="เลื่อนลง"><Caret /></ScrollButton>
        </VScroll>
      </SheetArea>

      <SheetTabs>
        <TabNav><Caret left /><Caret right /><b>...</b></TabNav>
        {sheetTabs.map((t) => <SheetTab key={t} $on={t === '14'}>{t}</SheetTab>)}
        <SheetTab $w={62}>ภาคผนวก</SheetTab>
        <SheetTab $w={71}>รูปประกอบ1</SheetTab>
        <AddSheet aria-label="แผ่นงานใหม่"><Svg w={13} h={13}><circle cx="6.500" cy="6.500" r="6" /><path d="M3.500 6.500h6M6.500 3.500v6" /></Svg></AddSheet>
        <Dots $m="0 11px 0 37px"><i /><i /><i /></Dots>
        <HScroll>
          <ScrollButton aria-label="เลื่อนซ้าย"><Caret left /></ScrollButton>
          <Thumb $flex={35} /><Track $flex={1} />
          <ScrollButton aria-label="เลื่อนขวา"><Caret right /></ScrollButton>
        </HScroll>
      </SheetTabs>

      <StatusBar>
        <Svg w={10} h={10}><path d="M2.500 3.500h7v6h-7zM2.500 5.500h7M5.500 3.500v6" /><circle cx="2" cy="2" r="1.500" fill="currentColor" /></Svg>
        <ViewButtons>
          <ViewButton $on aria-label="ปกติ"><Svg w={11} h={10}><path d="M.5 .5h10v9H.5zM.5 3.500h10M.5 6.500h10M4 .5v9M7 .5v9" /></Svg></ViewButton>
          <ViewButton aria-label="เค้าโครงหน้ากระดาษ"><Svg w={11} h={10}><path d="M.5 .5h10v9H.5zM3 2.500h5v5H3zM4 4.500h3" /></Svg></ViewButton>
          <ViewButton aria-label="แสดงตัวอย่างตัวแบ่งหน้า"><Svg w={11} h={10}><path d="M.5 .5h10v9H.5zM3.500 .5v5h4v-5M5.500 .5v3" /></Svg></ViewButton>
        </ViewButtons>
        <Zoom>
          <b>-</b><input type="range" aria-label="ย่อ/ขยาย" defaultValue="54" /><b>+</b><output>110%</output>
        </Zoom>
      </StatusBar>
    </Page>
  );
}
